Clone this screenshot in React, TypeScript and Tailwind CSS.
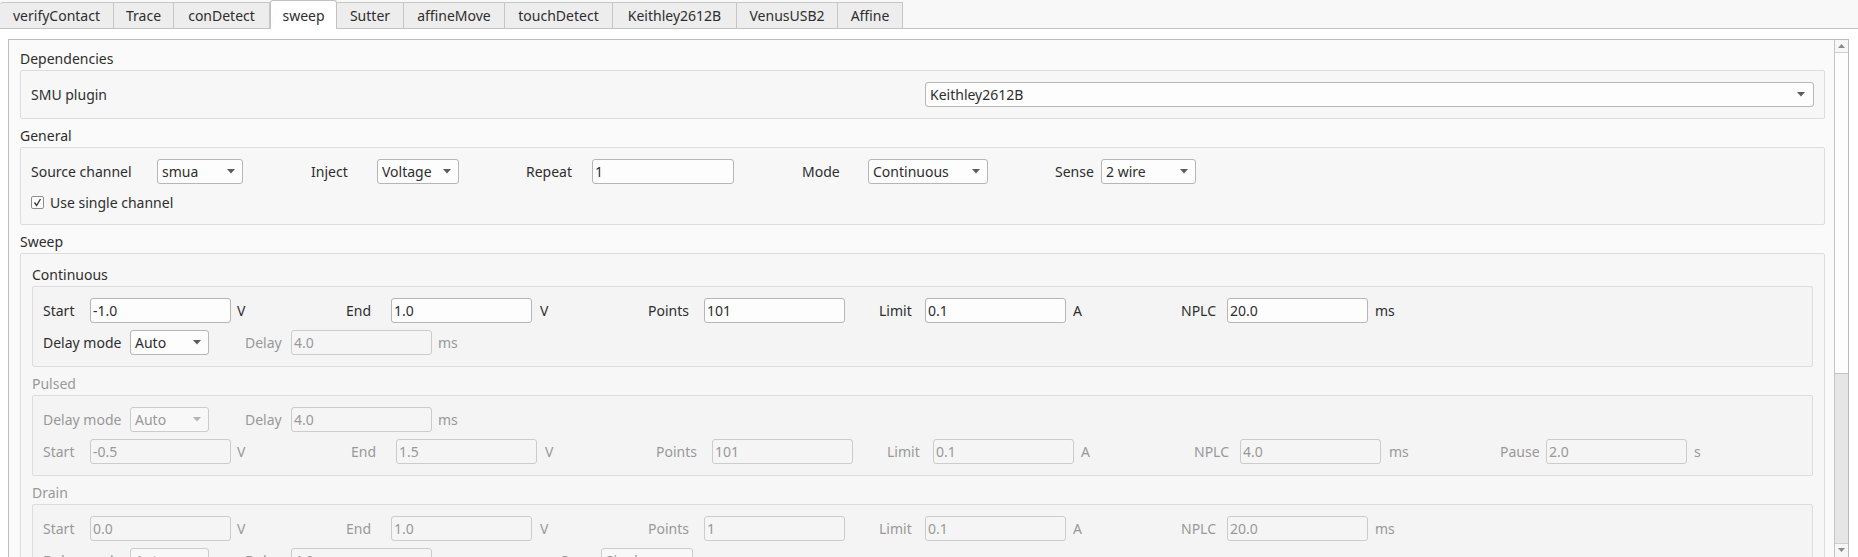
import clsx from 'clsx';
import type { ReactNode } from 'react';

type P = { children?: ReactNode; className?: string; off?: boolean };

const Lbl = ({ children, className, off }: P) => (
  <span className={clsx('shrink-0 whitespace-nowrap leading-[25px]', off ? 'text-[#999999]' : 'text-[#2e2e2e]', className)}>
    {children}
  </span>
);

const Field = ({ children, className, off }: P) => (
  <div
    className={clsx(
      'h-[25px] shrink-0 rounded-[3px] border pl-[2px] leading-[23px]',
      off ? 'border-[#cccccc] bg-[#f5f5f5] text-[#999999]' : 'border-[#b6b6b6] bg-[#fdfdfd] text-[#2e2e2e]',
      className,
    )}
  >
    {children}
  </div>
);

const Arrow = ({ off }: { off?: boolean }) => (
  <svg width="8" height="5" viewBox="0 0 8 5" className="shrink-0">
    <path d="M0 0h8L4 4.5z" fill={off ? '#b4b4b4' : '#5c5c5c'} />
  </svg>
);

const Combo = ({ children, className, off }: P) => (
  <div
    className={clsx(
      'flex h-[25px] shrink-0 items-center justify-between rounded-[3px] border pl-[4px] pr-[7px]',
      off ? 'border-[#cccccc] bg-[#f8f8f8] text-[#999999]' : 'border-[#b6b6b6] bg-[#fdfdfd] text-[#2e2e2e]',
      className,
    )}
  >
    <span className="leading-[23px]">{children}</span>
    <Arrow off={off} />
  </div>
);

const Title = ({ children, className, off }: P) => (
  <div className={clsx('h-[22px] leading-[22px]', off ? 'text-[#999999]' : 'text-[#2e2e2e]', className)}>{children}</div>
);

const tabs = [
  { name: 'verifyContact', w: 'w-[114px]' },
  { name: 'Trace', w: 'w-[60px]' },
  { name: 'conDetect', w: 'w-[96px]' },
  { name: 'sweep', w: 'w-[67px]', active: true },
  { name: 'Sutter', w: 'w-[67px]' },
  { name: 'affineMove', w: 'w-[101px]' },
  { name: 'touchDetect', w: 'w-[108px]' },
  { name: 'Keithley2612B', w: 'w-[124px]' },
  { name: 'VenusUSB2', w: 'w-[101px]' },
  { name: 'Affine', w: 'w-[65px]' },
];

// Start / End / Points / Limit / NPLC row used by Continuous and Drain
const RangeRow = ({ off, start, end, points, limit, nplc }: { off?: boolean; start: string; end: string; points: string; limit: string; nplc: string }) => (
  <div className="flex h-[25px] items-center">
    <Lbl off={off} className="w-[47px]">Start</Lbl>
    <Field off={off} className="w-[141px]">{start}</Field>
    <Lbl off={off} className="w-[115px] pl-[6px]">V</Lbl>
    <Lbl off={off} className="w-[45px]">End</Lbl>
    <Field off={off} className="w-[141px]">{end}</Field>
    <Lbl off={off} className="w-[116px] pl-[8px]">V</Lbl>
    <Lbl off={off} className="w-[56px]">Points</Lbl>
    <Field off={off} className="w-[141px]">{points}</Field>
    <Lbl off={off} className="w-[80px] pl-[34px]">Limit</Lbl>
    <Field off={off} className="w-[141px]">{limit}</Field>
    <Lbl off={off} className="w-[115px] pl-[7px]">A</Lbl>
    <Lbl off={off} className="w-[46px]">NPLC</Lbl>
    <Field off={off} className="w-[141px]">{nplc}</Field>
    <Lbl off={off} className="pl-[7px]">ms</Lbl>
  </div>
);

const DelayRow = ({ off, delayOff, children }: { off?: boolean; delayOff?: boolean; children?: ReactNode }) => (
  <div className="flex h-[25px] items-center">
    <Lbl off={off} className="w-[87px]">Delay mode</Lbl>
    <Combo off={off} className="w-[79px]">Auto</Combo>
    <Lbl off={off || delayOff} className="w-[82px] pl-[36px]">Delay</Lbl>
    <Field off={off || delayOff} className="w-[141px]">4.0</Field>
    <Lbl off={off || delayOff} className="pl-[6px]">ms</Lbl>
    {children}
  </div>
);

const Box = ({ children, className }: P) => (
  <div className={clsx('rounded-[2px] border border-[#dddddd]', className)}>{children}</div>
);

export default function App() {
  return (
    <div className="h-[557px] w-[1858px] overflow-hidden bg-white font-['Noto_Sans',sans-serif] text-[14px] text-[#2e2e2e]">
      {/* tab bar */}
      <div className="flex h-[29px] items-end border-b border-[#c2c2c2] bg-[#f8f8f8]">
        {tabs.map((t) =>
          t.active ? (
            <div
              key={t.name}
              className={clsx(t.w, '-mb-px flex h-[29px] items-center justify-center rounded-t-[3px] border-x border-t border-[#c2c2c2] bg-white')}
            >
              {t.name}
            </div>
          ) : (
            <div
              key={t.name}
              className={clsx(t.w, 'flex h-[26px] items-center justify-center border-r border-t border-[#c6c6c6] bg-[#ededed] first:rounded-tl-[3px]')}
            >
              {t.name}
            </div>
          ),
        )}
      </div>

      {/* scroll area */}
      <div className="ml-[8px] mt-[10px] flex h-[518px] w-[1841px] border-x border-t border-[#bcbcbc] bg-[#fafafa]">
        <div className="flex-1 pl-[11px] pr-[9px] pt-[8px]">
          <Title>Dependencies</Title>
          <Box className="bg-[#f7f7f7] px-[10px] py-[11px]">
            <div className="flex h-[25px] items-center">
              <Lbl className="w-[894px]">SMU plugin</Lbl>
              <Combo className="flex-1 pr-[8px]">Keithley2612B</Combo>
            </div>
          </Box>

          <Title className="mt-[6px]">General</Title>
          <Box className="bg-[#f7f7f7] px-[10px] pb-[12px] pt-[11px]">
            <div className="flex h-[25px] items-center">
              <Lbl className="w-[126px]">Source channel</Lbl>
              <Combo className="w-[86px]">smua</Combo>
              <Lbl className="w-[134px] pl-[68px]">Inject</Lbl>
              <Combo className="w-[82px]">Voltage</Combo>
              <Lbl className="w-[133px] pl-[67px]">Repeat</Lbl>
              <Field className="w-[142px]">1</Field>
              <Lbl className="w-[134px] pl-[68px]">Mode</Lbl>
              <Combo className="w-[120px]">Continuous</Combo>
              <Lbl className="w-[113px] pl-[67px]">Sense</Lbl>
              <Combo className="w-[95px]">2 wire</Combo>
            </div>
            <div className="mt-[8px] flex h-[20px] items-center gap-[6px]">
              <div className="flex h-[13px] w-[13px] items-center justify-center rounded-[2px] border border-[#8e8e8e] bg-white">
                <svg width="9" height="9" viewBox="0 0 9 9">
                  <path d="M1.5 4.5 L3.6 7.5 L7.5 1" fill="none" stroke="#3a3a3a" strokeWidth="1.4" />
                </svg>
              </div>
              <span>Use single channel</span>
            </div>
          </Box>

          <Title className="mt-[6px]">Sweep</Title>
          <Box className="bg-[#f7f7f7] px-[11px] pt-[10px]">
            <Title>Continuous</Title>
            <Box className="flex flex-col gap-[7px] bg-[#f4f4f4] px-[10px] py-[11px]">
              <RangeRow start="-1.0" end="1.0" points="101" limit="0.1" nplc="20.0" />
              <DelayRow delayOff />
            </Box>

            <Title off className="mt-[6px]">Pulsed</Title>
            <Box className="flex flex-col gap-[7px] bg-[#f4f4f4] px-[10px] py-[11px]">
              <DelayRow off />
              <div className="flex h-[25px] items-center">
                <Lbl off className="w-[47px]">Start</Lbl>
                <Field off className="w-[141px]">-0.5</Field>
                <Lbl off className="w-[120px] pl-[6px]">V</Lbl>
                <Lbl off className="w-[45px]">End</Lbl>
                <Field off className="w-[141px]">1.5</Field>
                <Lbl off className="w-[119px] pl-[8px]">V</Lbl>
                <Lbl off className="w-[56px]">Points</Lbl>
                <Field off className="w-[141px]">101</Field>
                <Lbl off className="w-[80px] pl-[34px]">Limit</Lbl>
                <Field off className="w-[141px]">0.1</Field>
                <Lbl off className="w-[120px] pl-[7px]">A</Lbl>
                <Lbl off className="w-[46px]">NPLC</Lbl>
                <Field off className="w-[141px]">4.0</Field>
                <Lbl off className="w-[119px] pl-[8px]">ms</Lbl>
                <Lbl off className="w-[46px]">Pause</Lbl>
                <Field off className="w-[141px]">2.0</Field>
                <Lbl off className="pl-[7px]">s</Lbl>
              </div>
            </Box>

            <Title off className="mt-[6px]">Drain</Title>
            <Box className="flex flex-col gap-[7px] bg-[#f4f4f4] px-[10px] py-[11px]">
              <RangeRow off start="0.0" end="1.0" points="1" limit="0.1" nplc="20.0" />
              <DelayRow off>
                <Lbl off className="ml-[103px] w-[40px]">Swee</Lbl>
                <Combo off className="w-[92px]">Single</Combo>
              </DelayRow>
            </Box>
          </Box>
        </div>

        {/* vertical scrollbar */}
        <div className="flex w-[14px] flex-col border-l border-[#c4c4c4]">
          <div className="flex h-[13px] items-center justify-center border-b border-[#cfcfcf] bg-[#f6f6f6]">
            <svg width="7" height="4" viewBox="0 0 7 4">
              <path d="M0 4h7L3.5 0z" fill="#8a8a8a" />
            </svg>
          </div>
          <div className="h-[324px] border-b border-[#c4c4c4] bg-[#fdfdfd]" />
          <div className="h-[170px] bg-[#e6e6e6]" />
          <div className="flex h-[14px] items-start justify-center border-t border-[#cfcfcf] bg-[#f6f6f6] pt-[4px]">
            <svg width="7" height="4" viewBox="0 0 7 4">
              <path d="M0 0h7L3.5 4z" fill="#8a8a8a" />
            </svg>
          </div>
        </div>
      </div>
    </div>
  );
}
